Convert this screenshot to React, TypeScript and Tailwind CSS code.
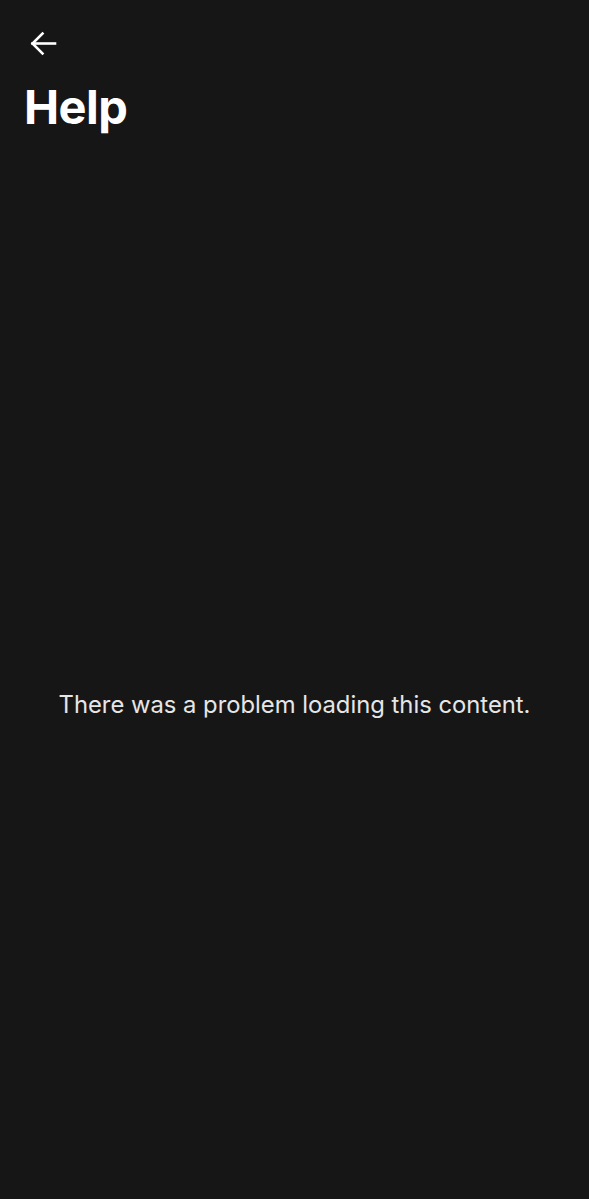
export default function App() {
  return (
    <main
      className="flex min-h-[1199px] flex-col bg-[#161616] text-white"
      style={{ fontFamily: "Inter, 'Noto Sans', sans-serif" }}
    >
      <header className="px-6 pt-[28px]">
        <button className="flex h-[30px] w-[36px] items-center justify-start pl-[6px]" aria-label="Back">
          <svg width="27" height="25" viewBox="0 0 27 25" fill="none" stroke="white" strokeWidth="2.6" strokeLinecap="square">
            <path d="M2.5 12.5H25" />
            <path d="M12.5 2.5L2.5 12.5L12.5 22.5" />
          </svg>
        </button>
        <h1 className="mt-[21px] text-[47px] font-bold leading-[56px] tracking-[-0.5px]">Help</h1>
      </header>

      <section className="flex flex-1 items-start justify-center pt-[554px]">
        <p className="text-center text-[23.8px] leading-[32px] text-[#e6e6e6]">
          There was a problem loading this content.
        </p>
      </section>
    </main>
  );
}
